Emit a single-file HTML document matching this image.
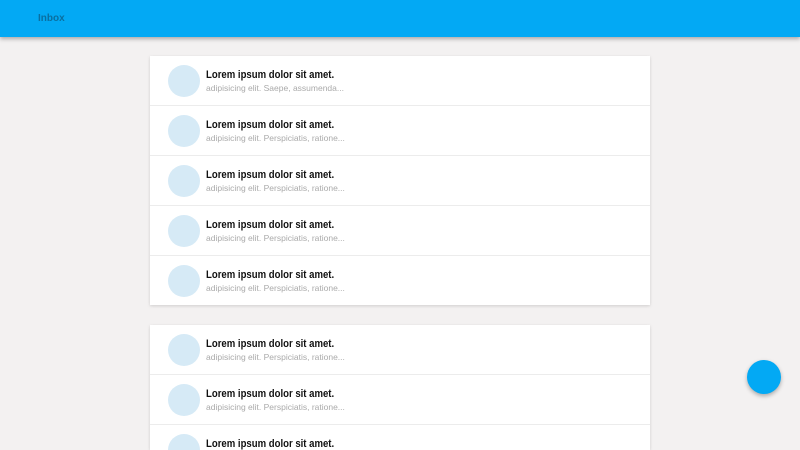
<!DOCTYPE html>
<html style="overflow:hidden;height:450px"><head><style>
body{margin:0;width:800px;height:450px;overflow:hidden;background:#f3f1f1;font-family:"Liberation Sans",sans-serif;position:relative}
.hdr{position:absolute;left:0;top:0;width:800px;height:37px;background:#03a9f4;box-shadow:0 2px 4px rgba(0,0,0,.3);z-index:2}
.hdr span{position:absolute;left:38px;top:13px;font-size:10px;font-weight:bold;color:#0a6fa0}
.card{position:absolute;left:150px;width:500px;background:#fff;box-shadow:0 1px 3px rgba(0,0,0,.15)}
.row{height:49px;border-bottom:1px solid #ececec;position:relative}
.row:last-child{border-bottom:none}
.av{position:absolute;left:18px;top:9px;width:32px;height:32px;border-radius:50%;background:#d6eaf6}
.t{position:absolute;left:56px;top:13px;font-size:11px;font-weight:bold;color:#111;transform:scaleX(.87);transform-origin:left;white-space:nowrap}
.s{position:absolute;left:56px;top:27px;font-size:8.5px;color:#aaa;white-space:nowrap}
.fab{position:absolute;left:747px;top:360px;width:34px;height:34px;border-radius:50%;background:#03a9f4;box-shadow:0 2px 4px rgba(0,0,0,.3)}
</style></head><body>
<div class="hdr"><span>Inbox</span></div>
<div class="card" style="top:56px;height:249px">
<div class="row"><div class="av"></div><div class="t">Lorem ipsum dolor sit amet.</div><div class="s">adipisicing elit. Saepe, assumenda...</div></div>
<div class="row"><div class="av"></div><div class="t">Lorem ipsum dolor sit amet.</div><div class="s">adipisicing elit. Perspiciatis, ratione...</div></div>
<div class="row"><div class="av"></div><div class="t">Lorem ipsum dolor sit amet.</div><div class="s">adipisicing elit. Perspiciatis, ratione...</div></div>
<div class="row"><div class="av"></div><div class="t">Lorem ipsum dolor sit amet.</div><div class="s">adipisicing elit. Perspiciatis, ratione...</div></div>
<div class="row"><div class="av"></div><div class="t">Lorem ipsum dolor sit amet.</div><div class="s">adipisicing elit. Perspiciatis, ratione...</div></div>
</div>
<div class="card" style="top:325px;height:125px;overflow:hidden">
<div class="row"><div class="av"></div><div class="t">Lorem ipsum dolor sit amet.</div><div class="s">adipisicing elit. Perspiciatis, ratione...</div></div>
<div class="row"><div class="av"></div><div class="t">Lorem ipsum dolor sit amet.</div><div class="s">adipisicing elit. Perspiciatis, ratione...</div></div>
<div class="row" style="height:25px"><div class="av"></div><div class="t">Lorem ipsum dolor sit amet.</div></div>
</div>
<div class="fab"></div>
</body></html>
